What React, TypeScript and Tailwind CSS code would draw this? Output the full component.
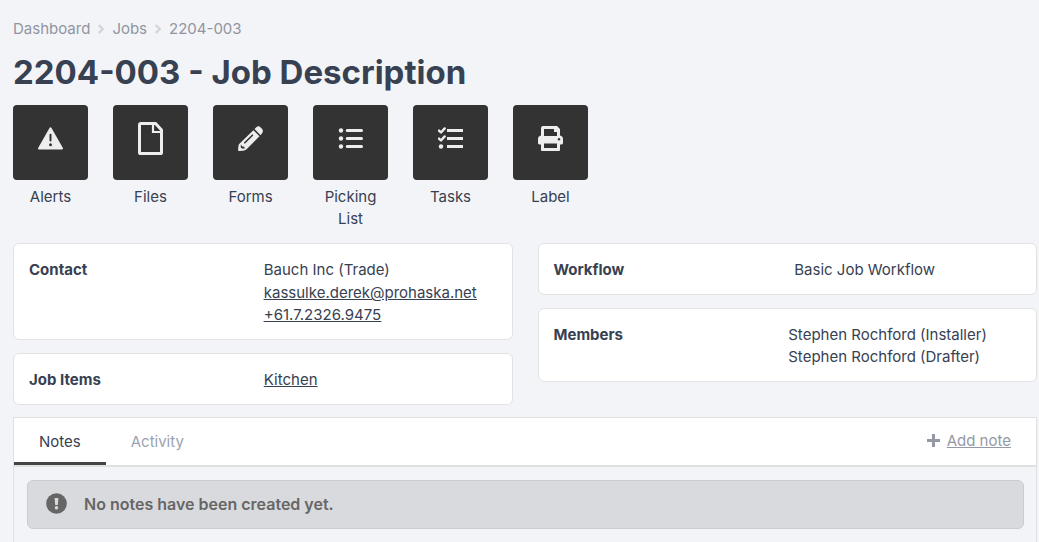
import React from "react";
import type { ReactNode } from "react";

type Action = {
  label: string;
  icon: ReactNode;
};

type Crumb = {
  label: string;
  href: string;
};

const crumbs: Crumb[] = [
  { label: "Dashboard", href: "#dashboard" },
  { label: "Jobs", href: "#jobs" },
  { label: "2204-003", href: "#job" },
];

const actions: Action[] = [
  {
    label: "Alerts",
    icon: (
      <>
        <path d="M12.5 6.3 24 26.5H1Z" fill="currentColor" stroke="currentColor" strokeWidth="2" strokeLinejoin="round" />
        <path d="M12.5 12.8v5.8" stroke="#333" strokeWidth="2" strokeLinecap="round" />
        <circle cx="12.5" cy="22.8" r="1.5" fill="#333" />
      </>
    ),
  },
  {
    label: "Files",
    icon: (
      <>
        <path
          d="M3 1.5H17.6L23.5 8V30.4Q23.5 31.5 22.4 31.5H2.6Q1.5 31.5 1.5 30.4V3Q1.5 1.5 3 1.5Z"
          stroke="currentColor"
          strokeWidth="3"
          strokeLinejoin="round"
        />
        <path d="M15 2v8h9" stroke="currentColor" strokeWidth="2.2" />
      </>
    ),
  },
  {
    label: "Forms",
    icon: (
      <>
        <path
          d="M15.4 8.2 21.5 14.3 8.6 27.2Q7 28.6 5 28.7L.9 29Q0 29 .1 28.1L.4 24.2Q.6 22.4 1.9 21.2Z"
          fill="currentColor"
        />
        <path d="M16.5 7.1 18.6 5Q20.6 3.4 22.9 5.7L24 6.8Q25.8 9.2 24 11.3L22.6 13.2Z" fill="currentColor" />
        <path d="M6.8 20.8 14.4 13.2" stroke="#333" strokeWidth="1.6" strokeLinecap="round" />
        <path d="M2.8 22.6V25.6L4 26.6 6.9 26.6 6.2 24.8 4.4 24.4Z" fill="#333" />
      </>
    ),
  },
  {
    label: "Picking List",
    icon: (
      <>
        <circle cx="3" cy="8.5" r="2.2" fill="currentColor" />
        <circle cx="3" cy="16.5" r="2.2" fill="currentColor" />
        <circle cx="3" cy="24.5" r="2.2" fill="currentColor" />
        <path d="M9.2 8.5H23.5M9.2 16.5H23.5M9.2 24.5H23.5" stroke="currentColor" strokeWidth="3" strokeLinecap="round" />
      </>
    ),
  },
  {
    label: "Tasks",
    icon: (
      <>
        <path
          d="M1 8.6 3 10.5 6.7 6.4M1 16.6 3 18.5 6.7 14.4"
          stroke="currentColor"
          strokeWidth="2.4"
          strokeLinecap="round"
          strokeLinejoin="round"
        />
        <circle cx="3" cy="24.5" r="2.2" fill="currentColor" />
        <path d="M9 7h16v3H9zM9 15h16v3H9zM9 23h16v3H9z" fill="currentColor" />
      </>
    ),
  },
  {
    label: "Label",
    icon: (
      <>
        <path
          fillRule="evenodd"
          d="M5 4H19L22 7V13.5Q25 14 25 17V21Q25 22.5 22 22.5V28Q22 29 21 29H4Q3 29 3 28V22.5Q0 22.5 0 21V17Q0 14 3 13.5V6Q3 4 5 4ZM6 7V14H19V10H16V7ZM6 21.5V26H19V21.5Z"
          fill="currentColor"
        />
        <circle cx="21" cy="17.2" r="1.2" fill="#333" />
      </>
    ),
  },
];

function ActionTile({ label, icon }: Action) {
  return (
    <button type="button" className="flex w-[75px] flex-col items-center gap-1.5">
      <span className="flex h-[75px] w-full justify-center rounded bg-[#333] pt-[17px] text-[#eee]">
        <svg width="25" height="33" viewBox="0 0 25 33" fill="none" aria-hidden="true">
          {icon}
        </svg>
      </span>
      <span>{label}</span>
    </button>
  );
}

function InfoCard({ title, children }: { title: string; children: ReactNode }) {
  return (
    <section className="grid grid-cols-2 gap-0.5 rounded-md border border-[#e2e2e2] bg-white px-[15px] pt-[15px] pb-[13px]">
      <h2 className="font-bold">{title}</h2>
      <div className="whitespace-nowrap">{children}</div>
    </section>
  );
}

export default function App() {
  return (
    <div className="flex min-h-screen flex-col bg-[#f3f4f8] pt-[18px] pr-0.5 pl-[13px] font-['Inter',sans-serif] text-[15px] leading-[22px] text-[#374151]">
      {/* Breadcrumbs */}
      <nav aria-label="Breadcrumb">
        <ol className="flex items-center gap-2 text-[#9095a1]">
          {crumbs.map((c, i) => (
            <li key={c.label} className="flex items-center gap-2">
              {i > 0 && (
                <svg width="6" height="10" viewBox="0 0 6 10" fill="none" aria-hidden="true">
                  <path d="M.8 1 4.8 5 .8 9" stroke="#d3d5d9" strokeWidth="2.4" />
                </svg>
              )}
              <a href={c.href}>{c.label}</a>
            </li>
          ))}
        </ol>
      </nav>

      <h1 className="mt-3 text-[33px] leading-10 font-bold">2204-003 - Job Description</h1>

      {/* Quick actions */}
      <div className="mt-[13px] flex flex-wrap items-start gap-[25px]">
        {actions.map((a) => (
          <ActionTile key={a.label} label={a.label} icon={a.icon} />
        ))}
      </div>

      {/* Job details */}
      <div className="mt-[13px] grid grid-cols-2 items-start gap-[25px]">
        <div className="flex flex-col gap-[13px]">
          <InfoCard title="Contact">
            <p>Bauch Inc (Trade)</p>
            <div className="mt-px flex flex-col items-start underline">
              <a href="mailto:kassulke.derek@prohaska.net">kassulke.derek@prohaska.net</a>
              <a href="tel:+61723269475">+61.7.2326.9475</a>
            </div>
          </InfoCard>
          <InfoCard title="Job Items">
            <a href="#kitchen" className="underline">Kitchen</a>
          </InfoCard>
        </div>
        <div className="flex flex-col gap-[13px]">
          <InfoCard title="Workflow">
            <p className="pl-1.5">Basic Job Workflow</p>
          </InfoCard>
          <InfoCard title="Members">
            <p>Stephen Rochford (Installer)</p>
            <p>Stephen Rochford (Drafter)</p>
          </InfoCard>
        </div>
      </div>

      {/* Notes */}
      <section className="mt-3 flex-1 border-x border-t border-[#e0e0e2]">
        <div className="flex items-center justify-between border-b-2 border-[#e0e0e2] bg-white">
          <div role="tablist" className="flex">
            <button
              type="button"
              role="tab"
              aria-selected="true"
              className="h-[47px] border-b-3 border-[#444] px-[25px] pt-[3px]"
            >
              Notes
            </button>
            <button
              type="button"
              role="tab"
              aria-selected="false"
              className="h-[47px] border-b-3 border-transparent px-[25px] pt-[3px] text-[#9ca3af]"
            >
              Activity
            </button>
          </div>
          <a href="#add-note" className="flex items-center gap-[7px] pr-[25px] pb-0.5 text-[#9499a5]">
            <svg width="13" height="13" viewBox="0 0 13 13" fill="none" aria-hidden="true">
              <path d="M6.5 0v13M0 6.5h13" stroke="currentColor" strokeWidth="3" />
            </svg>
            <span className="underline">Add note</span>
          </a>
        </div>
        <div
          role="status"
          className="mt-[13px] mr-3 ml-[13px] flex h-[49px] items-center gap-[17px] rounded-md border border-[#cbccce] bg-[#d9dadd] pb-0.5 pl-[18px] text-base leading-[22px] font-semibold text-[#666]"
        >
          <svg width="21" height="21" viewBox="0 0 21 21" fill="none" aria-hidden="true">
            <circle cx="10.5" cy="10.5" r="10.3" fill="currentColor" />
            <path d="M8.6 5h3.8l-.6 7H9.2Z" fill="#d9dadd" />
            <circle cx="10.5" cy="14.8" r="1.7" fill="#d9dadd" />
          </svg>
          <p>No notes have been created yet.</p>
        </div>
      </section>
    </div>
  );
}
